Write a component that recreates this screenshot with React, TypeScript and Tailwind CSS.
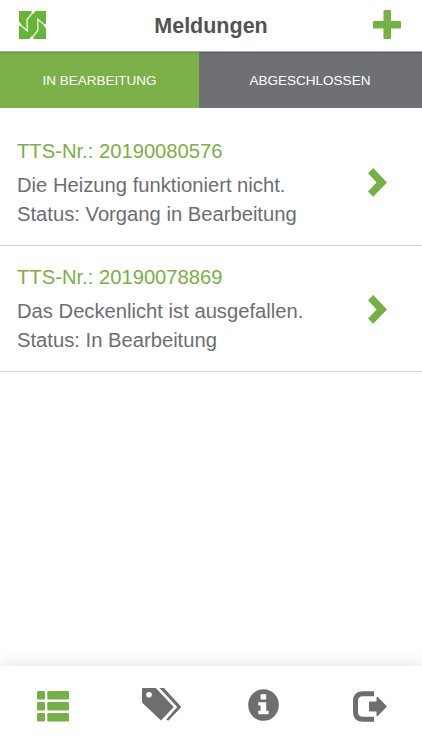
import { useState } from "react";

const messages = [
  {
    id: "20190080576",
    text: "Die Heizung funktioniert nicht.",
    status: "Vorgang in Bearbeitung",
  },
  {
    id: "20190078869",
    text: "Das Deckenlicht ist ausgefallen.",
    status: "In Bearbeitung",
  },
];

const Logo = () => (
  <svg width="27" height="28" viewBox="0 0 27 28">
    <path fill="#69b437" d="M0 0h27v28H0z" />
    <g fill="none" stroke="#e6f3dc" strokeWidth="1.4">
      <path d="M15.2-.5L8 8.8l.3 11L-.5 12.4" />
      <path d="M11.8 28.5L19 19.2l-.3-11 8.8 7.4" />
    </g>
    {/* notches on the four edges */}
    <path
      fill="#fff"
      d="M12.2 0h4.4l-2.6 3.2zM14.8 28h-4.4l2.6-3.2zM0 10.4v4.4l3-.6zM27 17.6v-4.4l-3 .6z"
    />
  </svg>
);

const Plus = () => (
  <svg width="28" height="29" viewBox="0 0 28 29" fill="#73b243">
    <rect x="0" y="11" width="28" height="7.5" rx="1" />
    <rect x="10.5" y="0" width="7.5" height="29" rx="1" />
  </svg>
);

const Chevron = () => (
  <svg
    width="19"
    height="29"
    viewBox="0 0 19 29"
    fill="#73b147"
    className="mt-0.5"
  >
    <path d="M5.2 0L19 14.4 5.2 28.8 0 23.6l8.6-9.2L0 5.2z" />
  </svg>
);

const ListIcon = () => (
  <svg width="32" height="31" viewBox="0 0 32 31" fill="#74b047">
    {[0, 11, 22].map((y) => (
      <g key={y}>
        <rect x="0" y={y} width="8" height="8.5" rx="1.3" />
        <rect x="10.3" y={y} width="21.7" height="8.5" rx="1.3" />
      </g>
    ))}
  </svg>
);

const TagsIcon = () => (
  <svg width="40" height="33" viewBox="0 0 40 33" fill="#6d6e70">
    <path
      fillRule="evenodd"
      d="M1 0h12.8L31.7 19 19 32.4 0 14.5V1q0-1 1-1zM7 4a2.8 2.8 0 1 0 0 5.6A2.8 2.8 0 0 0 7 4z"
    />
    <path d="M17.5 0H22l17.3 19-12.5 13.2q-1.2.8-2.5-.7L35.2 19z" />
  </svg>
);

const InfoIcon = () => (
  <svg width="31" height="32" viewBox="0 0 31 32">
    <ellipse cx="15.5" cy="16" rx="15.3" ry="15.8" fill="#6d6e70" />
    <path
      fill="#fff"
      d="M12.6 5.2h5.6v5.3h-5.6zM10.3 13.2h7.9v8.6h2.4v3.4H10.3v-3.4h2.3v-5.2h-2.3z"
    />
  </svg>
);

const LogoutIcon = () => (
  <svg width="34" height="31" viewBox="0 0 34 31">
    <path
      fill="none"
      stroke="#6d6e70"
      strokeWidth="5"
      d="M21 2.7H10Q2.5 2.7 2.5 10v11q0 7.3 7.5 7.3h11"
    />
    <path
      fill="#6d6e70"
      d="M17 10.5h6.5V7q0-2 1.5-.7l9 9.2-9 9.2q-1.5 1.3-1.5-.7v-3.5H17q-1 0-1-1v-8q0-1 1-1z"
    />
  </svg>
);

const App = () => {
  const [active, setActive] = useState(0);

  return (
    <div className="flex h-[750px] w-[422px] flex-col overflow-hidden bg-white font-['Liberation_Sans',Arial,sans-serif] text-[#6d6e71]">
      <header className="grid h-[51px] shrink-0 grid-cols-[1fr_auto_1fr] items-center pl-[19px] pr-[21px]">
        <div className="pb-0.5">
          <Logo />
        </div>
        <h1 className="pl-0.5 text-[21.5px] font-bold leading-[50px] text-[#535353]">
          Meldungen
        </h1>
        <div className="flex justify-end pb-0.5">
          <button type="button" aria-label="Neu">
            <Plus />
          </button>
        </div>
      </header>

      <div className="flex h-[57px] shrink-0 border-t border-[#a5a8a3] text-[13.5px] text-white">
        <button
          type="button"
          onClick={() => setActive(0)}
          className="w-[199px] bg-[#7cb048] pt-0.5 shadow-[inset_0_3px_2px_-2px_rgba(0,0,0,0.15)]"
        >
          IN BEARBEITUNG
        </button>
        <button
          type="button"
          onClick={() => setActive(1)}
          className="flex-1 bg-[#6f7073] pt-0.5 pr-px shadow-[inset_0_3px_2px_-2px_rgba(0,0,0,0.15)]"
        >
          ABGESCHLOSSEN
        </button>
      </div>

      <ul className="flex-1 pt-[11px]">
        {active === 0 &&
          messages.map((item) => (
            <li
              key={item.id}
              className="flex h-[126.5px] items-center justify-between border-b border-[#d4d4d4] pl-[17px] pr-[35px]"
            >
              <div className="pt-[2px] text-[20.22px] leading-[29px]">
                <p className="mb-[5px] text-[#7ab045]">TTS-Nr.: {item.id}</p>
                <p>{item.text}</p>
                <p>Status: {item.status}</p>
              </div>
              <Chevron />
            </li>
          ))}
      </ul>

      <nav className="flex h-[84px] shrink-0 items-start bg-white pl-[37px] pt-[22px] shadow-[0_-2px_14px_rgba(0,0,0,0.11)]">
        <button type="button" aria-label="Meldungen" className="mt-[3px]">
          <ListIcon />
        </button>
        <button type="button" aria-label="Kategorien" className="ml-[73px]">
          <TagsIcon />
        </button>
        <button
          type="button"
          aria-label="Info"
          className="ml-[66px] mt-[0.5px]"
        >
          <InfoIcon />
        </button>
        <button
          type="button"
          aria-label="Abmelden"
          className="ml-[74px] mt-[2.5px]"
        >
          <LogoutIcon />
        </button>
      </nav>
    </div>
  );
};

export default App;
